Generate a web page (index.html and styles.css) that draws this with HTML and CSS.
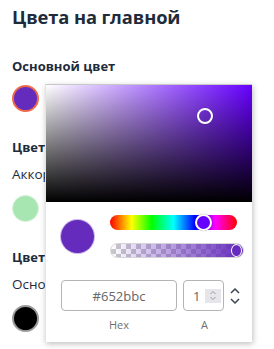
FILE: index.html
```html
<!DOCTYPE html>
<html lang="ru">
<head>
<meta charset="utf-8">
<link rel="stylesheet" href="styles.css">
</head>
<body>
<div class="page">
  <h2 class="title">Цвета на главной</h2>

  <section class="group first">
    <h3 class="group-title">Основной цвет</h3>
    <div class="swatch swatch-primary"></div>
  </section>

  <section class="group">
    <h3 class="group-title">Цвет акцентов</h3>
    <div class="sub">Аккордеон</div>
    <div class="swatch swatch-green"></div>
  </section>

  <section class="group">
    <h3 class="group-title">Цвет текста</h3>
    <div class="sub">Основной</div>
    <div class="swatch swatch-black"></div>
  </section>
</div>

<div class="picker">
  <div class="sat">
    <span class="sat-handle"></span>
  </div>
  <div class="controls">
    <div class="preview"></div>
    <div class="sliders">
      <div class="hue"><span class="hue-thumb"></span></div>
      <div class="alpha"><div class="alpha-fill"></div><span class="alpha-thumb"></span></div>
    </div>
  </div>
  <div class="inputs">
    <div class="field hex-field">
      <div class="box hex-box">#652bbc</div>
      <div class="label">Hex</div>
    </div>
    <div class="field a-field">
      <div class="a-row">
        <div class="box a-box">
          <span class="a-val">1</span>
          <span class="spin">
            <svg width="10" height="13" viewBox="0 0 10 13"><path d="M2.5 5 L5 2.5 L7.5 5 M2.5 8 L5 10.5 L7.5 8" fill="none" stroke="#9a9aa0" stroke-width="1"/></svg>
          </span>
        </div>
        <svg class="chev" width="12" height="20" viewBox="0 0 12 20"><path d="M2 7 L6 3 L10 7 M2 13 L6 17 L10 13" fill="none" stroke="#3a4350" stroke-width="1.5"/></svg>
      </div>
      <div class="label a-label">A</div>
    </div>
  </div>
</div>
</body>
</html>
```

FILE: styles.css
```css
html, body {
  margin: 0;
  padding: 0;
  background: #fff;
}
body {
  font-family: "Open Sans", "Noto Sans", sans-serif;
  color: #1e2b3b;
  width: 274px;
  height: 349px;
  overflow: hidden;
  position: relative;
}
.page {
  padding: 6px 12px 0;
}
.title {
  margin: 0;
  font-size: 18.3px;
  line-height: 22px;
  font-weight: 700;
  letter-spacing: -0.1px;
}
.group {
  margin-top: 25px;
}
.group.first {
  margin-top: 28px;
}
.group-title {
  margin: 0;
  font-size: 13px;
  line-height: 20px;
  font-weight: 700;
}
.sub {
  margin-top: 7px;
  font-size: 13.5px;
  line-height: 20px;
}
.swatch {
  width: 27px;
  height: 27px;
  border-radius: 50%;
  box-sizing: border-box;
  margin-top: 9px;
}
.sub + .swatch {
  margin-top: 11px;
}
.swatch-primary {
  background: #652bbc;
  border: 2px solid #ee6a4a;
}
.swatch-green {
  background: #a8e6b1;
  border: 1px solid #d8f0dc;
}
.swatch-black {
  background: #000;
  border: 2px solid #9a9a9a;
}

.picker {
  position: absolute;
  left: 45px;
  top: 84px;
  width: 207px;
  height: 258px;
  background: #fff;
  border-top: 1px solid #c8c8c8;
  border-left: 1px solid #e4e4e4;
  box-shadow: 1px 2px 6px rgba(0,0,0,0.25);
  box-sizing: border-box;
}
.sat {
  position: relative;
  height: 117px;
  background:
    linear-gradient(to top, #000, rgba(0,0,0,0)),
    linear-gradient(to right, #fff, hsl(264, 100%, 50%));
}
.sat-handle {
  position: absolute;
  left: 151px;
  top: 23px;
  width: 12px;
  height: 12px;
  border: 2px solid #fff;
  border-radius: 50%;
  box-shadow: 0 0 1px rgba(0,0,0,0.4);
}
.controls {
  display: flex;
  align-items: center;
  padding: 13px 0 0 15px;
}
.preview {
  width: 33px;
  height: 33px;
  border-radius: 50%;
  background: #652bbc;
  box-shadow: 0 0 0 1px rgba(101,43,188,0.35);
  flex: none;
}
.sliders {
  margin-left: 16px;
  display: flex;
  flex-direction: column;
  gap: 13px;
}
.hue {
  position: relative;
  width: 127px;
  height: 15px;
  border-radius: 8px;
  background: linear-gradient(to right, #f00 0%, #ff0 17%, #0f0 33%, #0ff 50%, #00f 67%, #f0f 83%, #f00 100%);
}
.hue-thumb {
  position: absolute;
  left: 85px;
  top: -1px;
  width: 13px;
  height: 13px;
  border-radius: 50%;
  border: 2px solid #fff;
  background: hsl(264, 100%, 50%);
  box-shadow: 0 0 1px rgba(0,0,0,0.5);
}
.alpha {
  position: relative;
  width: 134px;
  height: 15px;
  border-radius: 8px;
  box-sizing: border-box;
  border: 1px solid #d4d4d8;
  background-color: #fff;
  background-image:
    linear-gradient(45deg, #c8c8cc 25%, transparent 25%, transparent 75%, #c8c8cc 75%),
    linear-gradient(45deg, #c8c8cc 25%, transparent 25%, transparent 75%, #c8c8cc 75%);
  background-size: 10px 10px;
  background-position: 0 0, 5px 5px;
  overflow: hidden;
}
.alpha-fill {
  position: absolute;
  inset: 0;
  background: linear-gradient(to right, rgba(101,43,188,0), #652bbc);
}
.alpha-thumb {
  position: absolute;
  right: 1px;
  top: 0;
  width: 9px;
  height: 11px;
  border-radius: 50%;
  border: 1px solid #fff;
  background: #652bbc;
}
.inputs {
  display: flex;
  padding: 22px 0 0 15px;
  gap: 6px;
}
.field {
  display: flex;
  flex-direction: column;
  align-items: center;
}
.box {
  height: 31px;
  box-sizing: border-box;
  border: 1px solid #b4b4b8;
  border-radius: 4px;
  font-size: 13px;
  color: #666;
  display: flex;
  align-items: center;
}
.hex-box {
  width: 116px;
  justify-content: center;
}
.label {
  margin-top: 7px;
  font-size: 11px;
  line-height: 14px;
  color: #707070;
}
.a-field {
  align-items: flex-start;
}
.a-row {
  display: flex;
  align-items: center;
}
.a-box {
  width: 41px;
  padding-left: 9px;
}
.a-val {
  flex: 1;
}
.spin {
  width: 16px;
  height: 14px;
  background: #e6e6ea;
  margin-right: 2px;
  display: flex;
  align-items: center;
  justify-content: center;
}
.chev {
  margin-left: 5px;
}
.a-label {
  margin-left: 18px;
}
```
